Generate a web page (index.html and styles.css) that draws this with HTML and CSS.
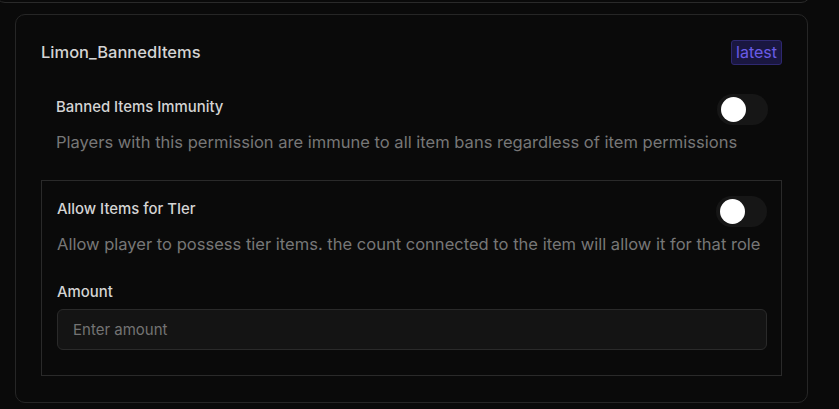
FILE: index.html
```html
<!DOCTYPE html>
<html lang="en">
<head>
<meta charset="utf-8">
<title>Limon_BannedItems</title>
<link rel="stylesheet" href="styles.css">
</head>
<body>
<div class="page">
  <div class="prev-card"></div>
  <section class="card">
    <header class="card-head">
      <h2 class="card-title">Limon_BannedItems</h2>
      <span class="badge">latest</span>
    </header>

    <div class="perm">
      <div class="perm-row">
        <span class="perm-label">Banned Items Immunity</span>
        <span class="toggle"><span class="knob"></span></span>
      </div>
      <p class="perm-desc">Players with this permission are immune to all item bans regardless of item permissions</p>
    </div>

    <div class="perm-box">
      <div class="perm-row">
        <span class="perm-label">Allow Items for TIer</span>
        <span class="toggle"><span class="knob"></span></span>
      </div>
      <p class="perm-desc">Allow player to possess tier items. the count connected to the item will allow it for that role</p>
      <label class="field-label" for="amount">Amount</label>
      <input class="field-input" id="amount" type="text" placeholder="Enter amount">
    </div>
  </section>
</div>
</body>
</html>
```

FILE: styles.css
```css
* { box-sizing: border-box; }

html, body {
  margin: 0;
  background: #0a0a0a;
  font-family: Inter, "Noto Sans", sans-serif;
  height: 100%;
  overflow: hidden;
}

.page {
  padding: 0 31px 0 15px;
}

.prev-card {
  height: 22px;
  margin: -19px -3px 0 -20px;
  border: 1px solid #2a2a2a;
  border-radius: 10px;
}

.card {
  margin-top: 11px;
  border: 1px solid #262626;
  border-radius: 10px;
  padding: 25px 25px 26px 25px;
}

.card-head {
  display: flex;
  align-items: center;
  justify-content: space-between;
  height: 24px;
}

.card-title {
  margin: 0;
  font-size: 16.5px;
  font-weight: 500;
  color: #d4d4d4;
  line-height: 24px;
}

.badge {
  display: inline-flex;
  align-items: center;
  height: 25px;
  padding: 0 4px;
  font-size: 16px;
  color: #6b5ce7;
  background: #1a1740;
  border: 1px solid #2e2870;
  border-radius: 3px;
}

.perm {
  padding: 30px 14px 0 15px;
}

.perm-row {
  display: flex;
  justify-content: space-between;
  align-items: flex-start;
}

.perm-label {
  padding-top: 1px;
  font-size: 14.9px;
  font-weight: 550;
  color: #d4d4d4;
  line-height: 24px;
}

.toggle {
  position: relative;
  width: 51px;
  height: 31px;
  border-radius: 16px;
  background: #161616;
  flex: none;
}

.knob {
  position: absolute;
  top: 3px;
  left: 4px;
  width: 25px;
  height: 25px;
  border-radius: 50%;
  background: #ffffff;
}

.perm-desc {
  margin: 5px 0 0;
  font-size: 16.55px;
  line-height: 24px;
  color: #777777;
}

.perm-box {
  margin-top: 26px;
  border: 1px solid #2a2a2a;
  padding: 15px 14px 25px 15px;
}

.field-label {
  display: block;
  margin-top: 26px;
  font-size: 14.9px;
  font-weight: 550;
  color: #d4d4d4;
  line-height: 20px;
}

.field-input {
  display: block;
  width: 100%;
  height: 41px;
  margin-top: 7px;
  padding: 0 15px;
  background: #141414;
  border: 1px solid #2a2a2a;
  border-radius: 6px;
  font-family: inherit;
  font-size: 15px;
  color: #d4d4d4;
  outline: none;
}

.field-input::placeholder {
  color: #737373;
}
```
